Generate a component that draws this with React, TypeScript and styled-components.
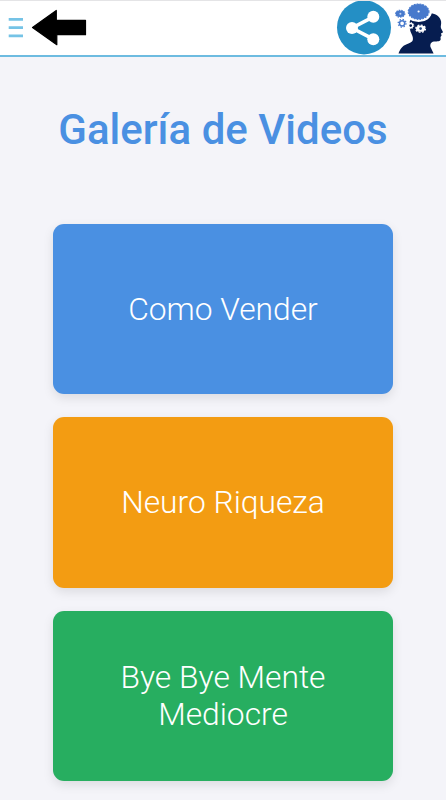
import React from "react";
import styled, { createGlobalStyle } from "styled-components";

const GlobalStyle = createGlobalStyle`
  * { box-sizing: border-box; }
  body {
    margin: 0;
    background: #f4f4f9;
    font-family: Roboto, "Liberation Sans", sans-serif;
  }
`;

const Page = styled.div`
  height: 800px;
  overflow: hidden;
  background: #f4f4f9;
`;

const Header = styled.header`
  display: flex;
  align-items: flex-start;
  justify-content: space-between;
  height: 57px;
  background: #fff;
  border-top: 1px solid #e4e4e6;
  border-bottom: 2px solid #6dbbe0;
`;

const HeaderGroup = styled.div`
  display: flex;
  align-items: flex-start;
`;

const IconButton = styled.button`
  display: block;
  padding: 0;
  border: 0;
  background: none;
  line-height: 0;
`;

const Main = styled.main`
  display: flex;
  flex-direction: column;
  align-items: center;
  padding-top: 48px;
`;

const Title = styled.h1`
  margin: 0 0 69px;
  font-size: 42px;
  line-height: 50px;
  font-weight: 500;
  color: #4a90e2;
  white-space: nowrap;
`;

const Gallery = styled.div`
  display: flex;
  flex-direction: column;
  gap: 23px;
`;

const Card = styled.a<{ $color: string }>`
  display: flex;
  align-items: center;
  justify-content: center;
  width: 340.5px;
  height: 170.3px;
  padding: 0 40px;
  border-radius: 11px;
  background: ${(p) => p.$color};
  box-shadow: 0 4px 11px rgba(0, 0, 0, 0.1);
  color: #fff;
  font-size: 31.75px;
  line-height: 37px;
  font-weight: 300;
  text-align: center;
`;

const videos = [
  { title: "Como Vender", color: "#4a90e2" },
  { title: "Neuro Riqueza", color: "#f39c12" },
  { title: "Bye Bye Mente Mediocre", color: "#27ae60" },
];

const MenuIcon = () => (
  <svg width="30" height="54" viewBox="0 1 30 54">
    <path d="M8.7 19.4H23M8.7 27.6H23M8.7 35.9H23" stroke="#75c3e6" strokeWidth="2.8" />
  </svg>
);

const BackIcon = () => (
  <svg width="60" height="54" viewBox="30 1 60 54">
    <path
      d="M32.5 27.5L56.3 10.5V20.3H85.5V34.7H56.8V44.7Z"
      fill="#000"
      stroke="#000"
      strokeWidth="1.2"
      strokeLinejoin="round"
    />
  </svg>
);

const ShareIcon = () => (
  <svg width="56" height="54" viewBox="336 1 56 54">
    <circle cx="364" cy="27.4" r="27" fill="#248fc5" />
    <path d="M373.3 16.8L352 28L373.3 39.2" fill="none" stroke="#fff" strokeWidth="3.6" />
    <circle cx="373.3" cy="16.8" r="6" fill="#fff" />
    <circle cx="352" cy="28" r="6" fill="#fff" />
    <circle cx="373.3" cy="39.2" r="6" fill="#fff" />
  </svg>
);

const HeadIcon = () => (
  <svg width="54" height="54" viewBox="392 1 54 54">
    <path
      d="M398.5 53.5C400.5 48 403.5 45 408.5 43.5C413.5 42 413.8 39 411.8 34.5C410 31 409 26.5 409.6 22L411 18.5C414 22.5 427 22 431.5 13.2C436.5 14 440.5 17 441.1 21.5C441.5 24.5 440.3 26.3 441 28.3L443.1 32.2L441 33.4L441.6 35.6L440.5 37L440.7 39.2C440.4 41.5 437.5 41.3 434 41.4C430.5 42 430 44.5 430.5 47L433.6 53.5Z"
      fill="#061d50"
    />
    <ellipse cx="418.6" cy="11.7" rx="12.2" ry="9.4" fill="none" stroke="#fff" strokeWidth="2" />
    <ellipse cx="418.6" cy="11.7" rx="10.3" ry="7.6" fill="#4779cc" />
    <ellipse cx="418.6" cy="11.7" rx="10.4" ry="7.7" fill="none" stroke="#4779cc" strokeWidth="1.1" strokeDasharray="1.8 1.1" />
    <circle cx="418.6" cy="11.5" r="1.1" fill="#fff" />
    <ellipse cx="400.2" cy="13.7" rx="4.5" ry="3.3" fill="#4779cc" />
    <ellipse cx="400.2" cy="13.7" rx="4.7" ry="3.5" fill="none" stroke="#4779cc" strokeWidth="1.1" strokeDasharray="1.4 1.1" />
    <circle cx="400.4" cy="13.7" r="1" fill="#c3d5f4" />
    <circle cx="402.1" cy="23.3" r="2.6" fill="none" stroke="#4779cc" strokeWidth="1.5" />
    <circle cx="402.1" cy="23.3" r="3.9" fill="none" stroke="#4779cc" strokeWidth="1.3" strokeDasharray="1.4 1.66" />
    <circle cx="410.7" cy="25.6" r="2.1" fill="#061d50" stroke="#fff" strokeWidth="1.4" />
    <circle cx="410.7" cy="25.6" r="3.1" fill="none" stroke="#fff" strokeWidth="1" strokeDasharray="1.2 1.2" />
    <ellipse cx="420.6" cy="28.7" rx="4.6" ry="3.1" fill="#fff" />
    <ellipse cx="420.6" cy="28.7" rx="4.9" ry="3.6" fill="none" stroke="#fff" strokeWidth="1.3" strokeDasharray="1.9 1.4" />
    <circle cx="420.6" cy="28.6" r="1.3" fill="#24477e" />
  </svg>
);

export default function App() {
  return (
    <>
      <GlobalStyle />
      <Page>
        <Header>
          <HeaderGroup>
            <IconButton aria-label="Menú">
              <MenuIcon />
            </IconButton>
            <IconButton aria-label="Volver">
              <BackIcon />
            </IconButton>
          </HeaderGroup>
          <HeaderGroup>
            <IconButton aria-label="Compartir">
              <ShareIcon />
            </IconButton>
            <HeadIcon />
          </HeaderGroup>
        </Header>
        <Main>
          <Title>Galería de Videos</Title>
          <Gallery>
            {videos.map((video) => (
              <Card key={video.title} $color={video.color}>
                {video.title}
              </Card>
            ))}
          </Gallery>
        </Main>
      </Page>
    </>
  );
}
